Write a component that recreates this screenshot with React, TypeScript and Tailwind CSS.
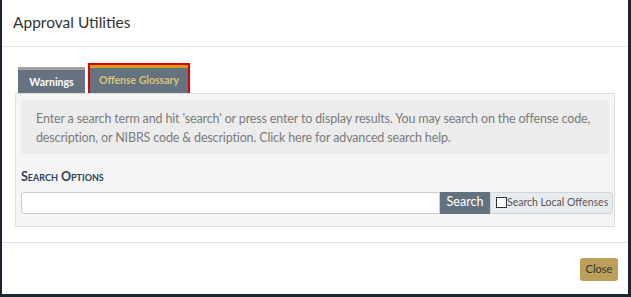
export default function App() {
  return (
    <div className="h-[297px] w-[631px] overflow-hidden bg-[#1c2633] font-['Lato',sans-serif]">
      <div className="ml-[2px] flex h-[294px] w-[626px] flex-col bg-white">
        {/* header */}
        <div className="flex h-[47px] shrink-0 items-center border-b border-[#e5e5e5] pl-[11px]">
          <h4 className="text-[15.5px] leading-none text-[#333]">Approval Utilities</h4>
        </div>

        {/* body */}
        <div className="flex h-[195px] shrink-0 flex-col px-[13px] pt-[16px]">
          <div className="flex items-end gap-[3px] pl-[3px]">
            <div className="flex h-[28px] w-[67px] items-center justify-center whitespace-nowrap border-t-[3px] border-[#a59f9f] bg-[#64737f] text-[10.5px] font-bold text-white">
              Warnings
            </div>
            <div className="border-2 border-[#e00000]">
              <div className="flex h-[28px] w-[98px] items-center justify-center whitespace-nowrap border-t-[3px] border-[#d39a1c] bg-[#64737f] text-[10.5px] font-bold text-[#dcc27a]">
                Offense Glossary
              </div>
            </div>
          </div>
          <div className="-mt-[2px] flex h-[134px] flex-col border border-[#dddddd] bg-[#f5f5f5] px-[5px] pt-[6px]">
            <div className="h-[54px] bg-[#ececec] px-[15px] pt-[9px] text-[12.5px] leading-[19px] tracking-[-0.15px] text-[#7b7b7b]">
              Enter a search term and hit 'search' or press enter to display results. You may search on the offense code,
              description, or NIBRS code &amp; description. Click here for advanced search help.
            </div>
            <div className="mt-[17px] text-[12.5px] font-bold leading-none text-[#2d3f5c] [font-variant:small-caps]">
              Search Options
            </div>
            <div className="mt-[8px] flex h-[22px] w-[592px]">
              <input className="h-full flex-1 rounded-l-[3px] border border-[#cccccc] bg-white outline-none" />
              <div className="flex w-[50px] items-center justify-center bg-[#627280] text-[12.5px] text-white">
                Search
              </div>
              <label className="flex w-[123px] items-center whitespace-nowrap rounded-r-[3px] border border-[#cfd4d8] bg-[#e9ecef] pl-[5px] text-[10.5px] text-[#555]">
                <span className="h-[11px] w-[11px] shrink-0 border border-[#333] bg-white" />
                <span>Search Local Offenses</span>
              </label>
            </div>
          </div>
        </div>

        {/* footer */}
        <div className="flex flex-1 items-start justify-end border-t border-[#e2e0e8] pr-[10px] pt-[15px]">
          <button className="h-[23px] w-[38px] rounded-[3px] bg-[#bb9f5b] text-[11px] text-[#333]">
            Close
          </button>
        </div>
      </div>
    </div>
  );
}
